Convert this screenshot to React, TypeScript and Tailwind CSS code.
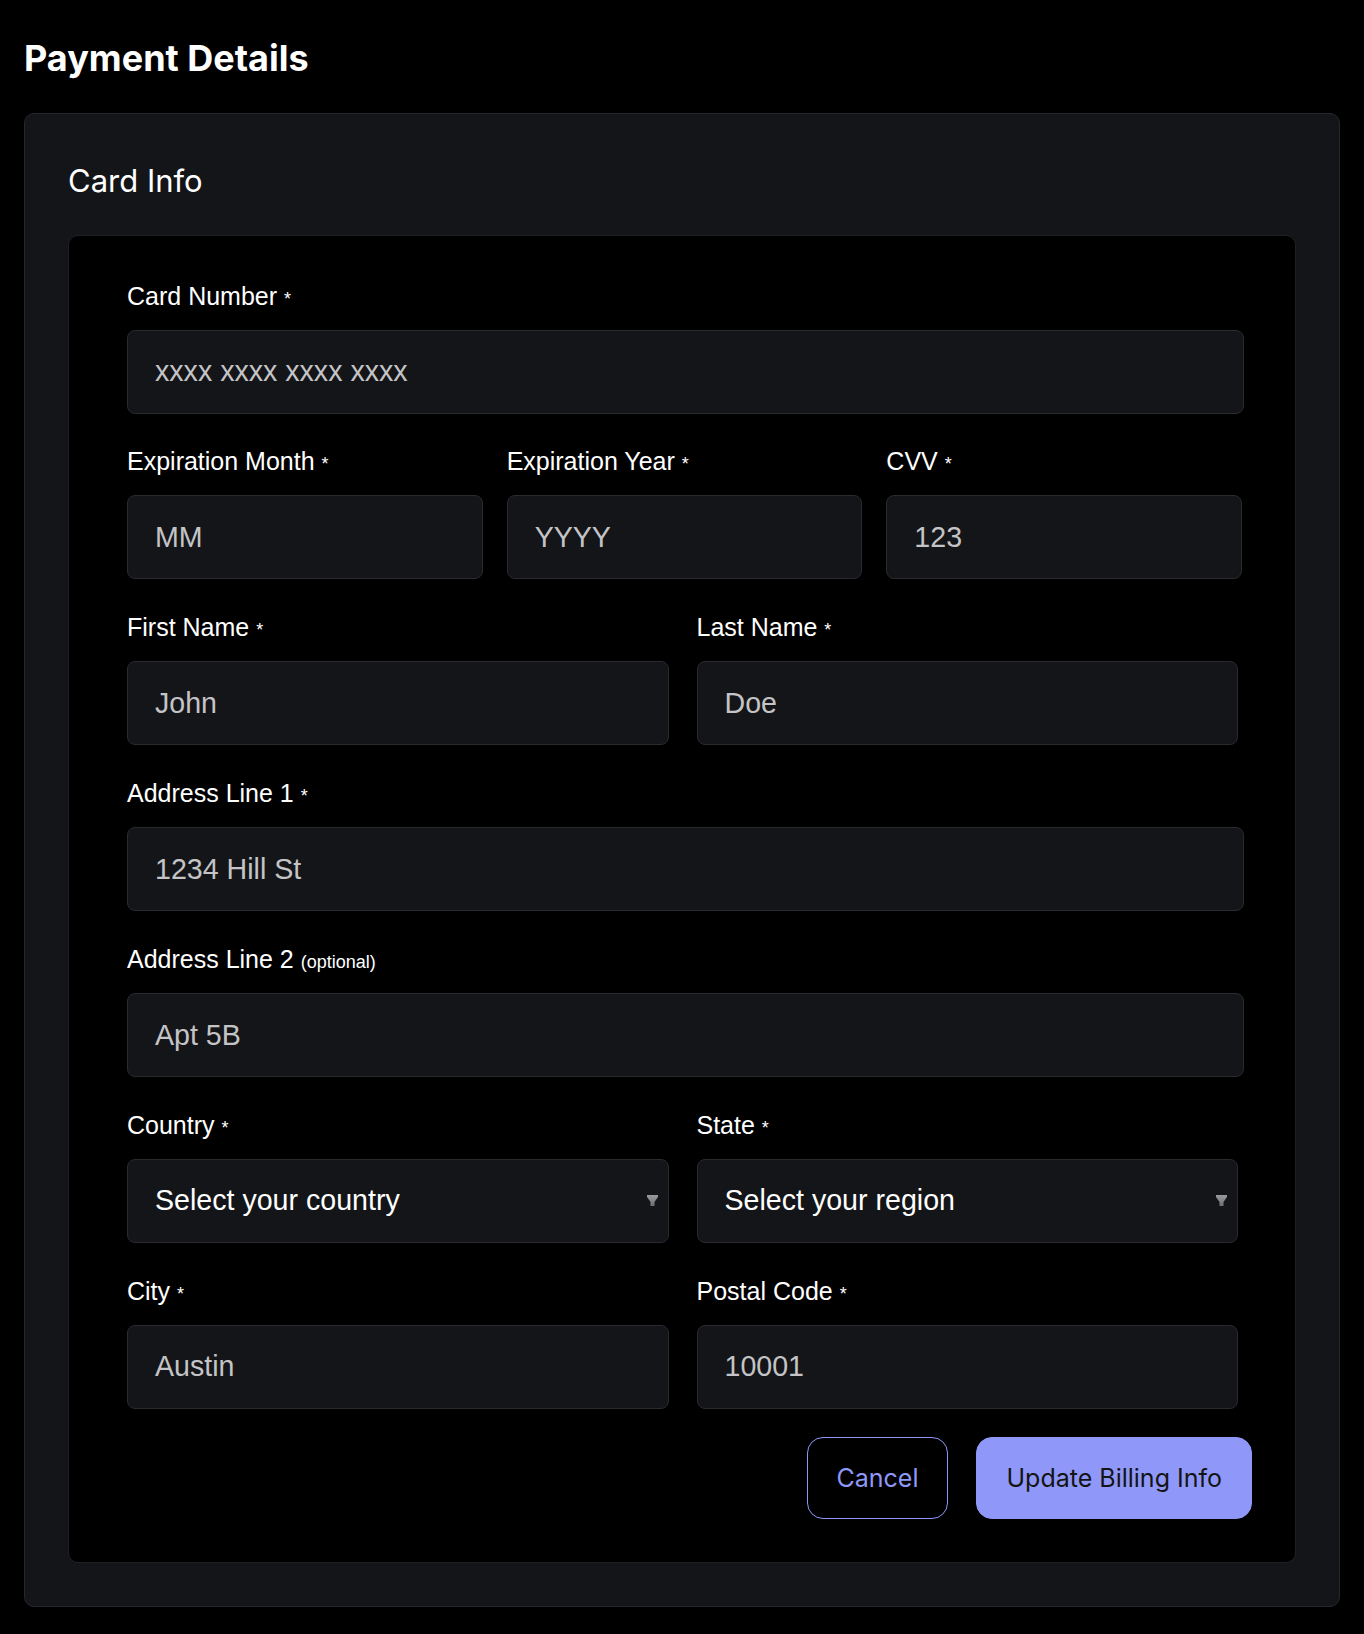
import React from "react";

const labelCls =
  "font-['Liberation_Sans',Arial,sans-serif] text-[25px] leading-[30px] h-[30px] text-white whitespace-nowrap";
const boxCls =
  "h-[84px] rounded-[8px] border border-[#2a2b2f] bg-[#141518] pl-[27px] pr-[10px] flex items-center font-['Liberation_Sans',Arial,sans-serif] text-[28.6px]";

function Label({ text, optional }: { text: string; optional?: boolean }) {
  return (
    <div className={labelCls}>
      {text}{" "}
      {optional ? (
        <span className="text-[18px] leading-none">(optional)</span>
      ) : (
        <span className="text-[18px] leading-none">*</span>
      )}
    </div>
  );
}

function Field({
  label,
  value,
  optional,
}: {
  label: string;
  value: string;
  optional?: boolean;
}) {
  return (
    <div className="flex flex-col gap-[19px]">
      <Label text={label} optional={optional} />
      <div className={`${boxCls} text-[#c4c4c6]`}>{value}</div>
    </div>
  );
}

function Arrow() {
  return (
    <svg width="11" height="11" viewBox="0 0 11 11" className="shrink-0">
      <defs>
        <linearGradient id="ag" x1="0" y1="0" x2="0" y2="1">
          <stop offset="0" stopColor="#9a9a9c" />
          <stop offset="1" stopColor="#6e6e70" />
        </linearGradient>
      </defs>
      <polygon points="0,0 11,0 11,2 7.5,7 7.5,11 3.5,11 3.5,7 0,2" fill="url(#ag)" />
    </svg>
  );
}

function SelectField({ label, value }: { label: string; value: string }) {
  return (
    <div className="flex flex-col gap-[19px]">
      <Label text={label} />
      <div className={`${boxCls} justify-between text-white`}>
        <span>{value}</span>
        <Arrow />
      </div>
    </div>
  );
}

export default function App() {
  return (
    <div className="min-h-screen bg-black px-6 pt-[36px] pb-[27px]">
      <h1 className="font-['Inter',sans-serif] font-bold text-[36px] leading-[44px] text-white">
        Payment Details
      </h1>
      <div className="mt-[33px] rounded-[10px] border border-[#26272b] bg-[#141518] px-[43px] pt-[47px] pb-[43px]">
        <h2 className="font-['Inter',sans-serif] text-[31px] leading-[40px] text-white">
          Card Info
        </h2>
        <div className="mt-[33.6px] rounded-[10px] border border-[#1f2023] bg-black pl-[58px] pr-[43px] pt-[45px] pb-[43px]">
          <div className="flex flex-col gap-[32.85px]">
            <div className="w-[1117px]">
              <Field label="Card Number" value="xxxx xxxx xxxx xxxx" />
            </div>
            <div className="grid w-[1115px] grid-cols-3 gap-6">
              <Field label="Expiration Month" value="MM" />
              <Field label="Expiration Year" value="YYYY" />
              <Field label="CVV" value="123" />
            </div>
            <div className="grid w-[1111px] grid-cols-2 gap-[28px]">
              <Field label="First Name" value="John" />
              <Field label="Last Name" value="Doe" />
            </div>
            <div className="w-[1117px]">
              <Field label="Address Line 1" value="1234 Hill St" />
            </div>
            <div className="w-[1117px]">
              <Field label="Address Line 2" value="Apt 5B" optional />
            </div>
            <div className="grid w-[1111px] grid-cols-2 gap-[28px]">
              <SelectField label="Country" value="Select your country" />
              <SelectField label="State" value="Select your region" />
            </div>
            <div className="grid w-[1111px] grid-cols-2 gap-[28px]">
              <Field label="City" value="Austin" />
              <Field label="Postal Code" value="10001" />
            </div>
          </div>
          <div className="mt-[28.6px] flex justify-end gap-[28px]">
            <button className="h-[82px] rounded-[16px] border border-[#8d96f6] bg-black px-[29px] font-['Inter',sans-serif] text-[25px] text-[#8f98f8]">
              Cancel
            </button>
            <button className="h-[82px] rounded-[16px] border border-[#8f98f8] bg-[#8f98f8] px-[29px] font-['Inter',sans-serif] text-[25px] text-[#141414]">
              Update Billing Info
            </button>
          </div>
        </div>
      </div>
    </div>
  );
}
